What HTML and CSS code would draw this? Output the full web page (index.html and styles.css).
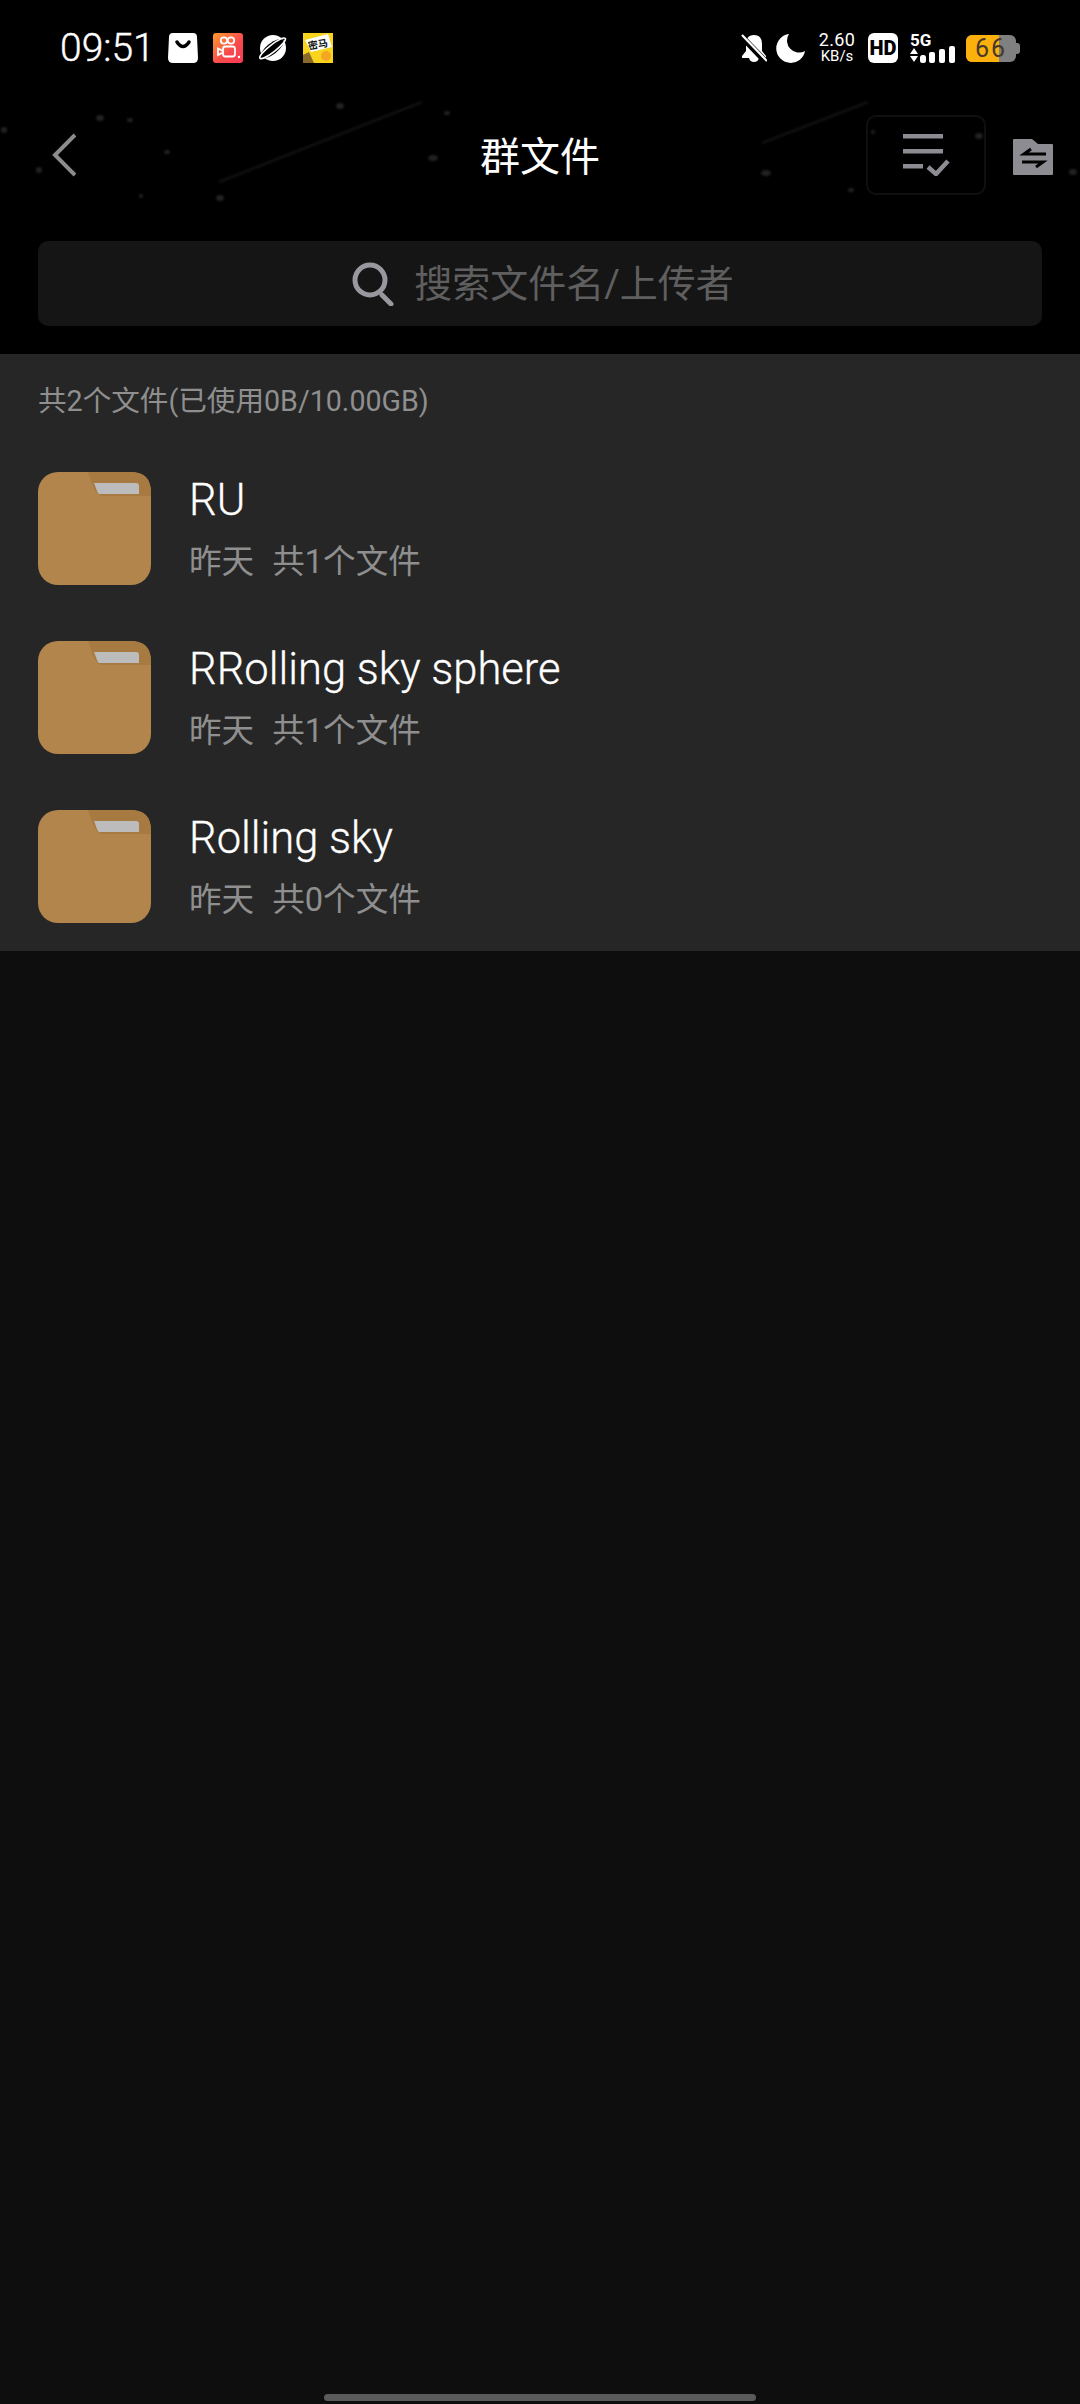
FILE: index.html
```html
<!DOCTYPE html>
<html>
  <head>
    <title>群文件</title>
    <link rel="stylesheet" href="styles.css">
  </head>
  <body>
    <div class="page">
      <header class="header">
        <!-- star field behind the header -->
        <svg class="stars" width="1080" height="354" viewBox="0 0 1080 354">
          <g fill="#222">
            <ellipse cx="4" cy="130" rx="3" ry="3"/>
            <ellipse cx="100" cy="118" rx="4" ry="3"/>
            <ellipse cx="130" cy="120" rx="3" ry="2"/>
            <ellipse cx="167" cy="152" rx="3" ry="2"/>
            <ellipse cx="39" cy="170" rx="3" ry="3"/>
            <ellipse cx="141" cy="196" rx="2" ry="2"/>
            <ellipse cx="220" cy="198" rx="4" ry="3"/>
            <ellipse cx="340" cy="106" rx="4" ry="3"/>
            <ellipse cx="447" cy="113" rx="3" ry="2"/>
            <ellipse cx="433" cy="158" rx="5" ry="3"/>
            <ellipse cx="766" cy="173" rx="5" ry="3"/>
            <ellipse cx="851" cy="190" rx="3" ry="2"/>
            <ellipse cx="873" cy="132" rx="2" ry="2"/>
            <ellipse cx="979" cy="136" rx="4" ry="3"/>
            <ellipse cx="1073" cy="172" rx="4" ry="3"/>
          </g>
          <g stroke="#151515" stroke-width="2">
            <line x1="219" y1="182" x2="422" y2="102"/>
            <line x1="762" y1="143" x2="868" y2="102"/>
          </g>
        </svg>

        <div class="status-bar">
          <div class="status-left">
            <span class="clock">09:51</span>
            <svg class="app-icon" viewBox="0 0 30 30">
              <path d="M5 0H25Q29 0 29 4L30 25Q30 30 25 30H5Q0 30 0 25L1 4Q1 0 5 0Z" fill="#fff"/>
              <path d="M9 9Q15 18 21 9" fill="none" stroke="#000" stroke-width="3.5" stroke-linecap="round"/>
            </svg>
            <svg class="app-icon" viewBox="0 0 30 30">
              <defs>
                <linearGradient id="ks" x1="0" y1="0" x2="1" y2="1">
                  <stop offset="0" stop-color="#ff9a2e"/>
                  <stop offset="0.6" stop-color="#f9494d"/>
                  <stop offset="1" stop-color="#f93a55"/>
                </linearGradient>
              </defs>
              <rect width="30" height="30" rx="3" fill="url(#ks)"/>
              <g fill="none" stroke="#fff" stroke-width="1.8">
                <circle cx="11" cy="7.5" r="3.2"/>
                <circle cx="18" cy="7.5" r="3.2"/>
                <rect x="10" y="13.5" width="12" height="10" rx="2.5"/>
                <path d="M10 18L5 15.5V22L10 19.5"/>
              </g>
              <circle cx="26" cy="24" r="1.2" fill="#fff"/>
            </svg>
            <svg class="app-icon" viewBox="0 0 30 30">
              <circle cx="15" cy="15" r="13" fill="#fff"/>
              <ellipse cx="14" cy="15" rx="14" ry="5.5" transform="rotate(-38 15 15)" fill="#000"/>
              <ellipse cx="14.5" cy="15" rx="16" ry="3.5" transform="rotate(-38 15 15)" fill="none" stroke="#fff" stroke-width="1.6"/>
            </svg>
            <svg class="app-icon" viewBox="0 0 30 30">
              <rect width="30" height="30" fill="#f8d41c"/>
              <path d="M2 7L25 1L29 14L8 19Z" fill="#fff"/>
              <text x="5" y="15" class="mima-text" transform="rotate(-10 15 12)">密马</text>
              <circle cx="23" cy="23" r="5" fill="#f5a623"/>
              <path d="M0 22L6 19L11 30H0Z" fill="#8a6a2a"/>
            </svg>
          </div>

          <div class="status-right">
            <svg class="bell" viewBox="0 0 26 28">
              <path d="M13 1C7 1 5 5 5 10V17L1 22V24H8Q9 28 13 28T18 24H25V22L21 17V10C21 5 19 1 13 1Z" fill="#fff"/>
              <path d="M0 2L25 28" stroke="#000" stroke-width="6"/>
              <path d="M1 1L26 27" stroke="#fff" stroke-width="2.2"/>
            </svg>
            <svg class="moon" viewBox="0 0 29 29">
              <path d="M13 0A14.5 14.5 0 1 0 29 17A12 12 0 0 1 13 0Z" fill="#fff"/>
            </svg>
            <div class="net-speed">
              <span class="speed-value">2.60</span>
              <span class="speed-unit">KB/s</span>
            </div>
            <div class="hd-badge">HD</div>
            <div class="signal">
              <span class="five-g">5G</span>
              <svg class="signal-bars" viewBox="0 0 46 30">
                <path d="M0 21L4 15L8 21ZM0 23H8L4 29Z" fill="#fff"/>
                <rect x="10" y="22" width="6" height="8" rx="2.5" fill="#fff"/>
                <rect x="19" y="19" width="6" height="11" rx="2" fill="#fff"/>
                <rect x="29" y="16" width="6" height="14" rx="2" fill="#fff"/>
                <rect x="39" y="13" width="6" height="17" rx="2" fill="#fff"/>
              </svg>
            </div>
            <div class="battery">
              <div class="battery-body">
                <div class="battery-fill" style="width: 66%"></div>
                <span class="battery-level">66</span>
              </div>
              <div class="battery-nub"></div>
            </div>
          </div>
        </div>

        <nav class="nav-bar">
          <svg class="back-icon" viewBox="0 0 24 44">
            <path d="M23 2L3 22L23 42" fill="none" stroke="#8c8c8c" stroke-width="4"/>
          </svg>
          <h1 class="nav-title">群文件</h1>
          <div class="nav-actions">
            <div class="select-button">
              <svg class="select-icon" viewBox="0 0 48 42">
                <g fill="#8c8c92">
                  <rect x="1" y="0" width="40" height="4.5"/>
                  <rect x="1" y="15" width="40" height="4.5"/>
                  <rect x="1" y="30" width="20" height="4.5"/>
                </g>
                <path d="M26 33L34 40L46 27" fill="none" stroke="#8c8c92" stroke-width="4.5"/>
              </svg>
            </div>
            <svg class="transfer-icon" viewBox="0 0 40 36">
              <path d="M0 1Q0 0 1 0H19L25 5H39Q40 5 40 6V35Q40 36 39 36H1Q0 36 0 35Z" fill="#8c8c92"/>
              <g fill="none" stroke="#000" stroke-width="3">
                <path d="M33 15H11L18 10"/>
                <path d="M9 23H30L23 28"/>
              </g>
            </svg>
          </div>
        </nav>

        <div class="search-box">
          <svg class="search-icon" viewBox="0 0 42 44">
            <circle cx="18" cy="18" r="15" fill="none" stroke="#98989e" stroke-width="5"/>
            <path d="M30 33L39 42" stroke="#98989e" stroke-width="5" stroke-linecap="round"/>
          </svg>
          <span class="search-placeholder">搜索文件名/上传者</span>
        </div>
      </header>

      <section class="file-list">
        <div class="file-summary">共2个文件(已使用0B/10.00GB)</div>

        <div class="file-row">
          <svg class="folder-icon" viewBox="0 0 113 113">
            <use href="#folder"/>
          </svg>
          <div class="file-info">
            <div class="file-name">RU</div>
            <div class="file-meta"><span>昨天</span><span>共1个文件</span></div>
          </div>
        </div>

        <div class="file-row">
          <svg class="folder-icon" viewBox="0 0 113 113">
            <use href="#folder"/>
          </svg>
          <div class="file-info">
            <div class="file-name">RRolling sky sphere</div>
            <div class="file-meta"><span>昨天</span><span>共1个文件</span></div>
          </div>
        </div>

        <div class="file-row">
          <svg class="folder-icon" viewBox="0 0 113 113">
            <use href="#folder"/>
          </svg>
          <div class="file-info">
            <div class="file-name">Rolling sky</div>
            <div class="file-meta"><span>昨天</span><span>共0个文件</span></div>
          </div>
        </div>
      </section>

      <div class="home-bar"></div>
    </div>

    <svg class="defs" width="0" height="0">
      <symbol id="folder" viewBox="0 0 113 113">
        <rect width="113" height="113" rx="20" fill="#b1854b"/>
        <path d="M50 0H93Q113 0 113 20V24H66Q58 24 55 14Z" fill="#a77a42"/>
        <path d="M56 11H98Q101 11 101 14V22H61Q60 22 59 19Z" fill="#bcbcbc"/>
      </symbol>
    </svg>
  </body>
</html>
```

FILE: styles.css
```css
* {
  box-sizing: border-box;
}

html,
body {
  margin: 0;
  padding: 0;
  background-color: #0e0e0e;
}

body {
  font-family: Roboto, "Noto Sans CJK SC", sans-serif;
  color: #fff;
}

.page {
  display: flex;
  flex-direction: column;
  position: relative;
  width: 1080px;
  height: 2404px;
  overflow: hidden;
}

.defs {
  position: absolute;
}

/* header */
.header {
  position: relative;
  display: flex;
  flex-direction: column;
  height: 354px;
  padding-top: 33px;
  background-color: #000;
}

.stars {
  position: absolute;
  top: 0;
  left: 0;
  filter: blur(0.8px);
}

.status-bar {
  position: relative;
  display: flex;
  justify-content: space-between;
  height: 30px;
  padding: 0 60px;
}

.status-left,
.status-right {
  display: flex;
  align-items: center;
}

.clock {
  width: 108px;
  font-size: 39px;
  font-weight: 300;
  line-height: 30px;
  -webkit-text-stroke: 0.4px #fff;
}

.app-icon {
  width: 30px;
  height: 30px;
  margin-right: 15px;
}

.mima-text {
  font-size: 10px;
  font-weight: 700;
  fill: #111;
}

.bell {
  width: 26px;
  height: 28px;
  margin-right: 9px;
}

.moon {
  width: 29px;
  height: 29px;
  margin-right: 12px;
}

.net-speed {
  display: flex;
  flex-direction: column;
  align-items: center;
  width: 40px;
  margin-right: 11px;
  line-height: 14px;
}

.speed-value {
  font-size: 18px;
  letter-spacing: 0.4px;
}

.speed-unit {
  margin-top: 2px;
  font-size: 15px;
}

.hd-badge {
  width: 30px;
  height: 30px;
  margin-right: 12px;
  border-radius: 6px;
  background-color: #fff;
  color: #000;
  font-size: 20px;
  font-weight: 900;
  line-height: 30px;
  text-align: center;
}

.signal {
  position: relative;
  width: 46px;
  height: 30px;
  margin-right: 10px;
}

.signal-bars {
  display: block;
  width: 46px;
  height: 30px;
}

.five-g {
  position: absolute;
  top: 0;
  left: 0;
  font-size: 17px;
  font-weight: 700;
  line-height: 14px;
}

.battery {
  display: flex;
  align-items: center;
}

.battery-body {
  position: relative;
  width: 50px;
  height: 27px;
  border-radius: 6px;
  background-color: #808080;
}

.battery-fill {
  height: 100%;
  border-radius: 6px 0 0 6px;
  background-color: #fbb00b;
}

.battery-level {
  position: absolute;
  inset: 0;
  color: #46392a;
  font-size: 25px;
  letter-spacing: 2px;
  line-height: 27px;
  text-align: center;
}

.battery-nub {
  width: 4px;
  height: 11px;
  border-radius: 0 3px 3px 0;
  background-color: #808080;
}

.nav-bar {
  position: relative;
  display: flex;
  align-items: center;
  justify-content: space-between;
  height: 130px;
  margin-top: 27px;
  padding: 0 27px 0 52px;
}

.back-icon {
  width: 24px;
  height: 44px;
}

.nav-title {
  position: absolute;
  left: 0;
  right: 0;
  top: 41px;
  margin: 0;
  font-size: 40px;
  font-weight: 400;
  line-height: 54px;
  text-align: center;
}

.nav-actions {
  display: flex;
  align-items: center;
  gap: 27px;
}

.select-button {
  display: flex;
  align-items: center;
  justify-content: center;
  width: 120px;
  height: 80px;
  border: 2px solid #0f0f0f;
  border-radius: 10px;
}

.select-icon {
  width: 48px;
  height: 42px;
}

.transfer-icon {
  width: 40px;
  height: 36px;
  margin-top: 4px;
}

.search-box {
  position: relative;
  display: flex;
  align-items: center;
  justify-content: center;
  gap: 20px;
  height: 85px;
  margin: 21px 38px 0;
  padding-left: 6px;
  border-radius: 10px;
  background-color: #151515;
}

.search-icon {
  width: 42px;
  height: 44px;
}

.search-placeholder {
  margin-bottom: 6px;
  color: #5f5f5f;
  font-size: 38px;
}

/* file list */
.file-list {
  display: flex;
  flex-direction: column;
  background-color: #262626;
}

.file-summary {
  height: 90px;
  padding: 27px 38px 0;
  color: #8f8f8f;
  font-size: 28.6px;
  line-height: 40px;
}

.file-row {
  display: flex;
  align-items: center;
  gap: 38px;
  height: 169px;
  padding: 0 38px;
}

.folder-icon {
  width: 113px;
  height: 113px;
  flex-shrink: 0;
}

.file-info {
  display: flex;
  flex-direction: column;
  gap: 15px;
  padding-top: 4px;
}

.file-name {
  font-size: 43.5px;
  font-weight: 300;
  line-height: 48px;
  -webkit-text-stroke: 0.3px #fff;
}

.file-meta {
  display: flex;
  gap: 18px;
  color: #8f8f8f;
  font-size: 32.6px;
  line-height: 44px;
}

.home-bar {
  position: absolute;
  left: 324px;
  bottom: 3px;
  width: 432px;
  height: 7px;
  border-radius: 4px;
  background-color: #5a5a5a;
}
```
